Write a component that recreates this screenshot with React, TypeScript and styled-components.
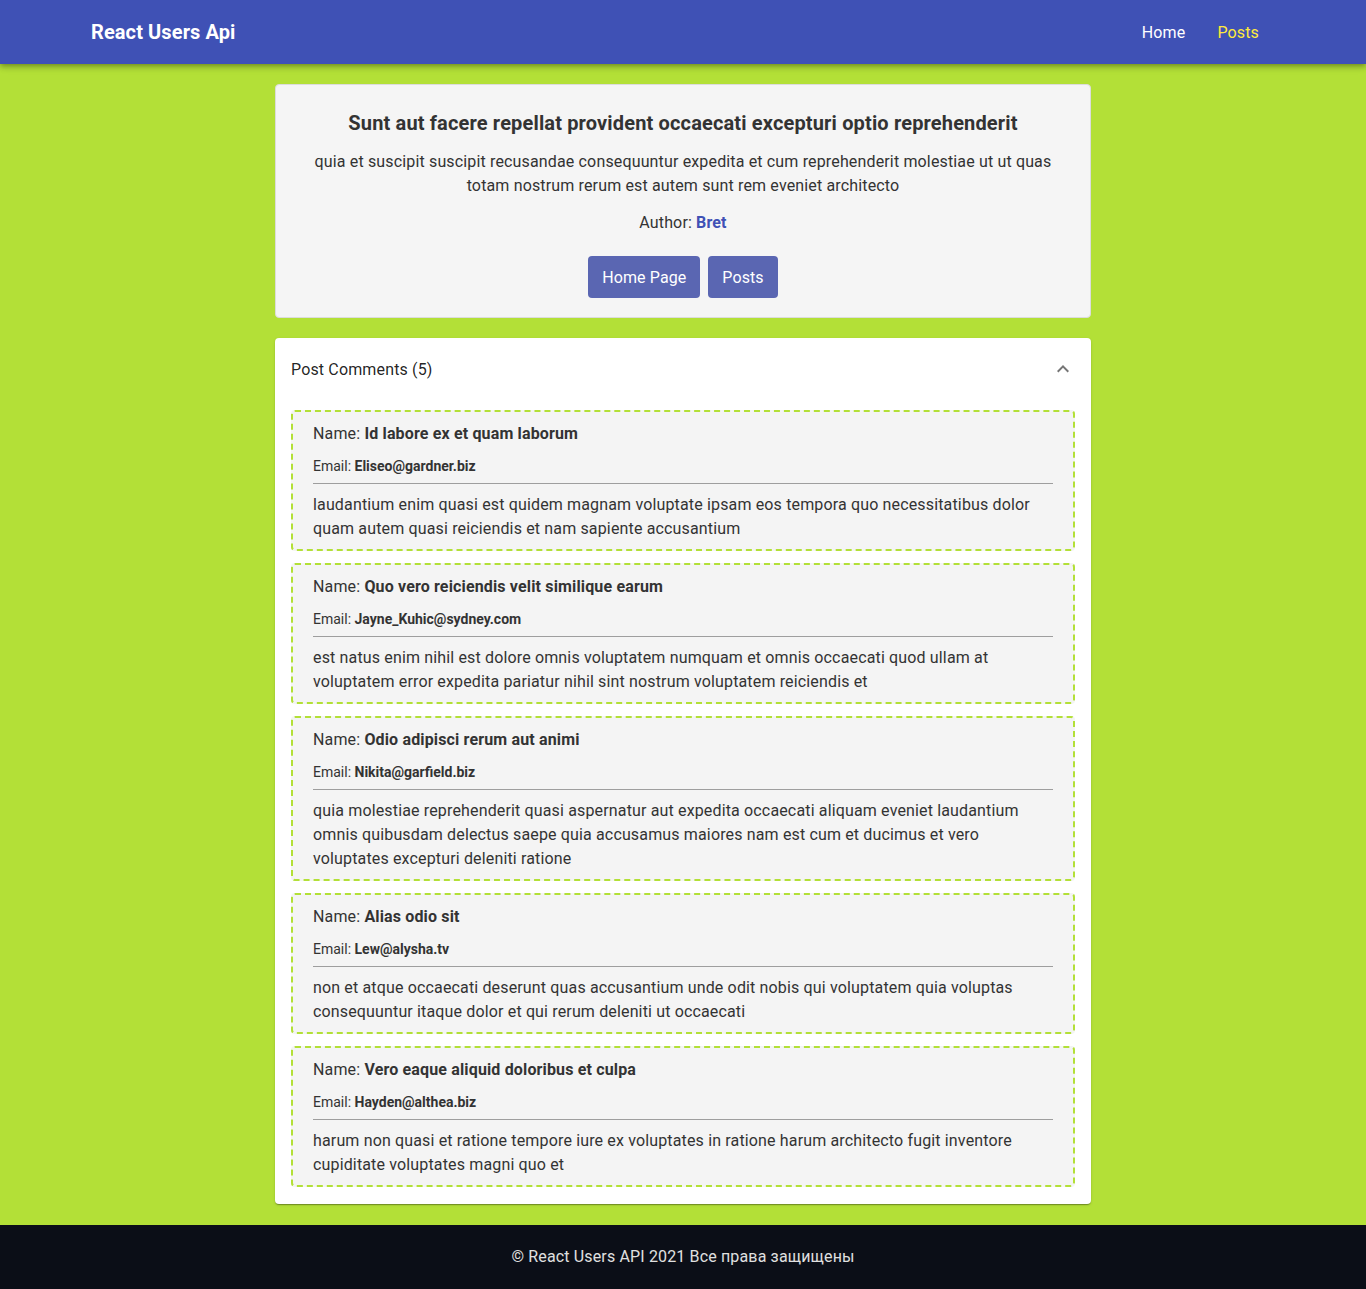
import React from "react";
import styled, { createGlobalStyle } from "styled-components";

const GlobalStyle = createGlobalStyle`
  html, body { margin: 0; padding: 0; }
  body {
    font-family: Roboto, "Noto Sans", "Liberation Sans", sans-serif;
    background: #b3e037;
    color: rgba(0,0,0,0.87);
    letter-spacing: 0.15px;
  }
  * { box-sizing: border-box; }
`;

const Page = styled.div`
  min-height: 1289px;
  display: flex;
  flex-direction: column;
`;

const Header = styled.header`
  height: 64px;
  background: #3f51b5;
  display: flex;
  align-items: center;
  justify-content: space-between;
  padding: 0 91px;
  box-shadow: 0 2px 4px -1px rgba(0,0,0,0.2), 0 4px 5px 0 rgba(0,0,0,0.14), 0 1px 10px 0 rgba(0,0,0,0.12);
  position: relative;
  z-index: 2;
`;

const Logo = styled.div`
  color: #fff;
  font-size: 20px;
  font-weight: 700;
  letter-spacing: 0.1px;
`;

const Nav = styled.nav`
  display: flex;
`;

const NavLink = styled.a<{ $active?: boolean }>`
  color: ${(p) => (p.$active ? "#ffeb3b" : "#fff")};
  font-size: 16px;
  padding: 0 16px;
  text-decoration: none;
`;

const Main = styled.main`
  flex: 1;
  width: 816px;
  margin: 0 auto;
  padding: 20px 0;
  display: flex;
  flex-direction: column;
  gap: 20px;
`;

const PostCard = styled.section`
  background: #f5f5f5;
  border: 1px solid #dcdcdc;
  border-radius: 4px;
  padding: 20px 36px 19px;
  text-align: center;
`;

const Title = styled.h2`
  margin: 2px 0 11px;
  font-size: 20px;
  line-height: 32px;
  font-weight: 700;
  color: #333;
`;

const Body = styled.p`
  margin: 0 0 13px;
  font-size: 16px;
  line-height: 24px;
  color: #333;
`;

const Author = styled.p`
  margin: 0 0 21px;
  font-size: 16px;
  line-height: 24px;
  color: #333;
`;

const AuthorName = styled.span`
  color: #3f51b5;
  font-weight: 700;
`;

const Buttons = styled.div`
  display: flex;
  justify-content: center;
  gap: 8px;
`;

const Button = styled.button`
  height: 42px;
  padding: 0 14px;
  border: none;
  border-radius: 4px;
  background: #5a66b2;
  color: #fff;
  font-family: inherit;
  font-size: 16px;
  letter-spacing: 0.1px;
  cursor: pointer;
`;

const Accordion = styled.section`
  background: #fff;
  border-radius: 4px;
  box-shadow: 0 2px 1px -1px rgba(0,0,0,0.2), 0 1px 1px 0 rgba(0,0,0,0.14), 0 1px 3px 0 rgba(0,0,0,0.12);
`;

const Summary = styled.div`
  height: 62px;
  padding: 0 16px;
  display: flex;
  align-items: center;
  justify-content: space-between;
  font-size: 16px;
  color: rgba(0,0,0,0.87);
`;

const Details = styled.div`
  padding: 10px 16px 17px;
  display: flex;
  flex-direction: column;
  gap: 12px;
`;

const Comment = styled.article`
  background: #f4f4f4;
  border: 2px dashed #b3e037;
  border-radius: 4px;
  padding: 10px 20px 8px;
  color: #333;
`;

const NameLine = styled.div`
  font-size: 16px;
  line-height: 24px;
`;

const EmailLine = styled.div`
  font-size: 14px;
  line-height: 20px;
  margin-top: 10px;
  letter-spacing: 0;
`;

const Strong = styled.b`
  font-weight: 700;
`;

const Rule = styled.hr`
  margin: 7px 0 9px;
  border: none;
  border-top: 1px solid #9e9e9e;
`;

const CommentBody = styled.p`
  margin: 0;
  font-size: 16px;
  line-height: 24px;
`;

const Footer = styled.footer`
  height: 64px;
  padding-bottom: 2px;
  background: #0b0e17;
  color: #e0e0e0;
  font-size: 16px;
  display: flex;
  align-items: center;
  justify-content: center;
`;

const comments = [
  {
    name: "Id labore ex et quam laborum",
    email: "Eliseo@gardner.biz",
    body: "laudantium enim quasi est quidem magnam voluptate ipsam eos tempora quo necessitatibus dolor quam autem quasi reiciendis et nam sapiente accusantium",
  },
  {
    name: "Quo vero reiciendis velit similique earum",
    email: "Jayne_Kuhic@sydney.com",
    body: "est natus enim nihil est dolore omnis voluptatem numquam et omnis occaecati quod ullam at voluptatem error expedita pariatur nihil sint nostrum voluptatem reiciendis et",
  },
  {
    name: "Odio adipisci rerum aut animi",
    email: "Nikita@garfield.biz",
    body: "quia molestiae reprehenderit quasi aspernatur aut expedita occaecati aliquam eveniet laudantium omnis quibusdam delectus saepe quia accusamus maiores nam est cum et ducimus et vero voluptates excepturi deleniti ratione",
  },
  {
    name: "Alias odio sit",
    email: "Lew@alysha.tv",
    body: "non et atque occaecati deserunt quas accusantium unde odit nobis qui voluptatem quia voluptas consequuntur itaque dolor et qui rerum deleniti ut occaecati",
  },
  {
    name: "Vero eaque aliquid doloribus et culpa",
    email: "Hayden@althea.biz",
    body: "harum non quasi et ratione tempore iure ex voluptates in ratione harum architecto fugit inventore cupiditate voluptates magni quo et",
  },
];

export default function App() {
  return (
    <>
      <GlobalStyle />
      <Page>
        <Header>
          <Logo>React Users Api</Logo>
          <Nav>
            <NavLink href="#">Home</NavLink>
            <NavLink href="#" $active>Posts</NavLink>
          </Nav>
        </Header>
        <Main>
          <PostCard>
            <Title>Sunt aut facere repellat provident occaecati excepturi optio reprehenderit</Title>
            <Body>
              quia et suscipit suscipit recusandae consequuntur expedita et cum reprehenderit molestiae ut ut quas totam nostrum rerum est autem sunt rem eveniet architecto
            </Body>
            <Author>
              Author: <AuthorName>Bret</AuthorName>
            </Author>
            <Buttons>
              <Button>Home Page</Button>
              <Button>Posts</Button>
            </Buttons>
          </PostCard>
          <Accordion>
            <Summary>
              <span>Post Comments (5)</span>
              <svg width="24" height="24" viewBox="0 0 24 24" fill="rgba(0,0,0,0.54)">
                <path d="M12 8l-6 6 1.41 1.41L12 10.83l4.59 4.58L18 14z" />
              </svg>
            </Summary>
            <Details>
              {comments.map((c) => (
                <Comment key={c.email}>
                  <NameLine>
                    Name: <Strong>{c.name}</Strong>
                  </NameLine>
                  <EmailLine>
                    Email: <Strong>{c.email}</Strong>
                  </EmailLine>
                  <Rule />
                  <CommentBody>{c.body}</CommentBody>
                </Comment>
              ))}
            </Details>
          </Accordion>
        </Main>
        <Footer>© React Users API 2021 Все права защищены</Footer>
      </Page>
    </>
  );
}
